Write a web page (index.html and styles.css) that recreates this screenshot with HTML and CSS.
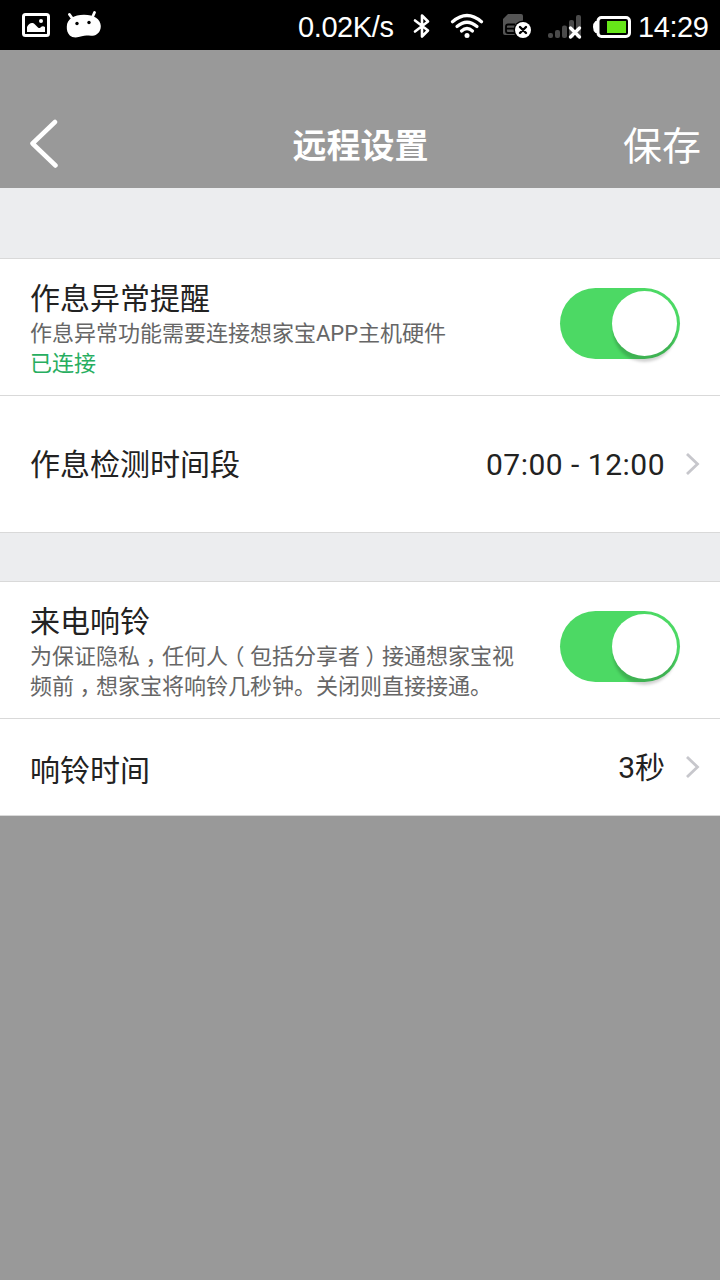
FILE: index.html
```html
<!DOCTYPE html>
<html lang="zh-CN">
<head>
  <meta charset="UTF-8">
  <title>远程设置</title>
  <link rel="stylesheet" href="styles.css">
</head>
<body>

  <div class="status-bar">
    <!-- notifications -->
    <svg class="icon-photo" width="28" height="24" viewBox="0 0 28 24">
      <rect x="1.500" y="1.500" width="25" height="21" rx="2" fill="none" stroke="#fff" stroke-width="3"/>
      <path d="M5 19v-5c2-3.500 5-5.500 8-2.500l3 3c1 .8 1.500.8 2.500 0 1.500-1.500 3-1.500 4.500-.5v5z" fill="#fff"/>
      <circle cx="19" cy="8" r="2" fill="#fff"/>
    </svg>
    <svg class="icon-android" width="36" height="27" viewBox="0 0 36 27">
      <path d="M6 7L3.500 3.500M26.500 6l2-4.500" stroke="#fff" stroke-width="2.800" stroke-linecap="round"/>
      <path d="M.8 15.500C1 8 8 3.800 18 3.800S34.500 8 34.800 15c0 6-4 9.500-8 9.700-4 .3-7-.7-11 .6-5 1.700-9.500 1.500-12-.8C1.500 22 .6 19 .8 15.500z" fill="#fff"/>
      <circle cx="11" cy="12.500" r="1.700"/>
      <circle cx="23" cy="11.500" r="1.700"/>
    </svg>

    <span class="speed">0.02K/s</span>

    <svg class="icon-bluetooth" width="18" height="26" viewBox="0 0 18 26">
      <path d="M2 7.500l13 10L9 23.500V2.500l6 6L2 18.500" fill="none" stroke="#fff" stroke-width="2.600" stroke-linecap="round" stroke-linejoin="round"/>
    </svg>
    <svg class="icon-wifi" width="34" height="26" viewBox="0 0 34 26">
      <g fill="none" stroke="#fff" stroke-width="3.200" stroke-linecap="round">
        <path d="M2.500 8.800Q17-3.800 31.500 8.800"/>
        <path d="M7 13.500q10-8.500 20 0"/>
        <path d="M11.500 18q5.500-5 11 0"/>
      </g>
      <circle cx="17" cy="22.500" r="2.500" fill="#fff"/>
    </svg>
    <svg class="icon-sim" width="30" height="26" viewBox="0 0 30 26">
      <path d="M6 1h13q2 0 2 2v19H3q-2 0-2-2V6z" fill="#555"/>
      <path d="M13 11.500H6q-2 0-2 2V18q0 2 2 2h7M4 15.700h8" fill="none" stroke="#000" stroke-width="1.800"/>
      <circle cx="21" cy="17" r="9.500"/>
      <circle cx="21" cy="17" r="8" fill="#fff"/>
      <path d="M18 14l6 6m0-6l-6 6" stroke="#000" stroke-width="2.400" stroke-linecap="round"/>
    </svg>
    <svg class="icon-signal" width="34" height="24" viewBox="0 0 34 24">
      <g fill="#4a4a4a">
        <rect x="0" y="18" width="5" height="5" rx="2"/>
        <rect x="7" y="15" width="5" height="8" rx="2"/>
        <rect x="14" y="10.500" width="5" height="12.500" rx="2"/>
        <rect x="21" y="5" width="5" height="18" rx="2"/>
        <rect x="28" y="0" width="5" height="23" rx="2"/>
      </g>
      <path d="M22.500 13l9 9m0-9l-9 9" stroke="#fff" stroke-width="3.200" stroke-linecap="round"/>
    </svg>
    <svg class="icon-battery" width="38" height="22" viewBox="0 0 38 22">
      <rect x="5" y="1.500" width="31.500" height="19" rx="3.500" fill="none" stroke="#fff" stroke-width="3"/>
      <path d="M5 5H2.500Q0 7 0 11t2.500 6H5z" fill="#fff"/>
      <rect x="14" y="5" width="19" height="12" fill="#66e619"/>
    </svg>
    <span class="clock">14:29</span>
  </div>

  <div class="nav">
    <svg class="back" width="30" height="50" viewBox="0 0 30 50">
      <path d="M26 3L3.500 24.500 26.500 46.500" fill="none" stroke="#fff" stroke-width="4.500" stroke-linecap="round" stroke-linejoin="round"/>
    </svg>
    <h1>远程设置</h1>
    <span class="save">保存</span>
  </div>

  <div class="settings">
    <div class="group">
      <div class="row">
        <div class="text">
          <div class="label">作息异常提醒</div>
          <div class="note">作息异常功能需要连接想家宝APP主机硬件</div>
          <div class="note connected">已连接</div>
        </div>
        <div class="switch"><div class="knob"></div></div>
      </div>
      <div class="row">
        <div class="label">作息检测时间段</div>
        <div class="value time">07:00 - 12:00</div>
        <svg class="arrow" width="16" height="24" viewBox="0 0 16 24">
          <path d="M2 2l10.500 10L2 22" fill="none" stroke="#c7c7cc" stroke-width="2.800"/>
        </svg>
      </div>
    </div>

    <div class="group">
      <div class="row">
        <div class="text">
          <div class="label">来电响铃</div>
          <div class="note">为保证隐私<span class="mid">，</span>任何人<span class="mid">（</span>包括分享者<span class="mid">）</span>接通想家宝视<br>频前<span class="mid">，</span>想家宝将响铃几秒钟。关闭则直接接通。</div>
        </div>
        <div class="switch"><div class="knob"></div></div>
      </div>
      <div class="row short">
        <div class="label">响铃时间</div>
        <div class="value">3秒</div>
        <svg class="arrow" width="16" height="24" viewBox="0 0 16 24">
          <path d="M2 2l10.500 10L2 22" fill="none" stroke="#c7c7cc" stroke-width="2.800"/>
        </svg>
      </div>
    </div>
  </div>

</body>
</html>
```
FILE: styles.css
```css
body {
  margin: 0;
  min-height: 1280px;
  background-color: #999;
  font-family: Roboto, "Noto Sans CJK SC", sans-serif;
  color: #222;
}
svg {
  display: block;
  flex: none;
}
/* Status bar */
.status-bar {
  display: flex;
  align-items: center;
  height: 50px;
  padding-left: 22px;
  background-color: #000;
  color: #fff;
  font-family: "Liberation Sans", Arial, sans-serif;
  font-size: 29px;
  line-height: 50px;
  letter-spacing: -0.4px;
  white-space: nowrap;
}
.icon-android {
  margin-left: 16px;
  margin-top: -2px;
}
.speed {
  width: 96px;
  margin-left: 196px;
  padding-top: 4px;
}
.icon-bluetooth {
  margin-left: 19px;
  margin-top: 2px;
}
.icon-wifi {
  margin-left: 19px;
  margin-top: 2px;
}
.icon-sim {
  margin-left: 18px;
  margin-top: 2px;
}
.icon-signal {
  margin-left: 16px;
  margin-top: 3px;
}
.icon-battery {
  margin-left: 11px;
  margin-top: 4px;
}
.clock {
  margin-left: 7px;
  padding-top: 4px;
}
/* Navigation */
.nav {
  display: grid;
  grid-template-columns: 1fr auto 1fr;
  align-items: center;
  height: 88px;
  padding: 50px 19px 0 29px;
  color: #fff;
}
.nav h1 {
  margin: 4px 0 0 -9px;
  font-size: 34px;
  line-height: 50px;
}
.save {
  justify-self: end;
  padding-top: 6px;
  font-size: 39px;
  line-height: 50px;
}
/* Settings */
.settings {
  padding-top: 70px;
  background-color: #ecedef;
}
.group {
  border-top: 1px solid #d9d9d9;
}
.group + .group {
  margin-top: 48px;
}
.row {
  display: flex;
  align-items: center;
  box-sizing: border-box;
  height: 137px;
  padding: 0 20px 0 30px;
  background-color: #fff;
  border-bottom: 1px solid #d9d9d9;
}
.row.short {
  height: 97px;
}
.text {
  padding-top: 4px;
}
.label {
  font-size: 30px;
  line-height: 40px;
}
.row > .label {
  padding-top: 2px;
}
.short > .label {
  padding-top: 7px;
}
.note {
  height: 30px;
  font-size: 22px;
  line-height: 30px;
  color: #666;
  white-space: nowrap;
}
.label + .note:last-child {
  height: 60px;
}
.connected {
  color: #27ae60;
}
/* half-width punctuation centred in a full cell */
.mid {
  margin: 0 5.5px;
  font-family: "Noto Sans CJK SC", sans-serif;
  font-feature-settings: "halt";
  line-height: 1;
}
.value {
  margin-left: auto;
  padding-top: 1px;
  font-size: 30px;
  line-height: 40px;
}
.time {
  letter-spacing: 0.5px;
}
.arrow {
  margin-left: 20px;
  margin-right: -1px;
}
.switch {
  display: flex;
  justify-content: flex-end;
  box-sizing: border-box;
  width: 120px;
  height: 71px;
  margin-top: -8px;
  margin-left: auto;
  padding: 3px;
  margin-right: 20px;
  border-radius: 36px;
  background-color: #4cd964;
}
.knob {
  width: 65px;
  height: 65px;
  border-radius: 50%;
  background-color: #fff;
  box-shadow: 0 7px 3px -1px rgba(0, 0, 0, 0.18);
}
```
